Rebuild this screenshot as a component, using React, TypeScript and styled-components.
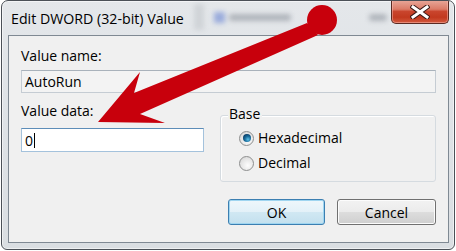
import React from "react";
import styled, { createGlobalStyle } from "styled-components";

const Global = createGlobalStyle`
  html, body { margin: 0; padding: 0; background: #ffffff; }
  body { font-family: "Open Sans", "Noto Sans", sans-serif; }
`;

const Stage = styled.div`
  position: relative;
  width: 456px;
  height: 251px;
  overflow: hidden;
`;

const Window = styled.div`
  box-sizing: border-box;
  margin-left: 1px;
  width: 454px;
  height: 250px;
  border: 1px solid #4b5057;
  border-radius: 7px 7px 6px 6px;
  background: linear-gradient(180deg, #e4e7ea 0%, #dfe3e7 40%, #dadee2 100%);
  box-shadow: inset 0 0 0 1px rgba(255, 255, 255, 0.55);
  display: flex;
  flex-direction: column;
  padding: 0 5px 6px 6px;
  overflow: hidden;
`;

const TitleBar = styled.div`
  height: 34px;
  display: flex;
  align-items: flex-start;
  flex-shrink: 0;
`;

const Title = styled.div`
  padding: 8px 0 0 3px;
  font-size: 14.2px;
  line-height: 20px;
  color: #000;
  white-space: nowrap;
`;

const Ghost = styled.div`
  display: flex;
  align-items: center;
  gap: 4px;
  margin: 8px 0 0 10px;
  height: 16px;
  filter: blur(2.5px);
  opacity: 0.7;
`;

const GhostBar = styled.div`
  width: 10px;
  height: 26px;
  background: #c8ccd0;
  margin-right: 6px;
`;

const GhostIcon = styled.div`
  width: 11px;
  height: 11px;
  background: #7b93d6;
`;

const GhostText = styled.div<{ $w: number }>`
  width: ${(p) => p.$w}px;
  height: 7px;
  background: #9aa0a8;
  border-radius: 3px;
`;

const GhostRight = styled(Ghost)`
  margin-left: 78px;
`;

const CloseButton = styled.div`
  margin-left: auto;
  margin-top: -1px;
  width: 58px;
  height: 24px;
  box-sizing: border-box;
  border: 1px solid #5a2a22;
  border-top: none;
  border-radius: 0 0 5px 5px;
  background: linear-gradient(
    180deg,
    #e9a99b 0%,
    #dc7b67 40%,
    #c9452d 50%,
    #c2391f 75%,
    #d35a3e 100%
  );
  box-shadow: inset 0 0 0 1px rgba(255, 200, 190, 0.45);
  display: flex;
  align-items: center;
  justify-content: center;
`;

const Client = styled.div`
  flex: 1;
  box-sizing: border-box;
  border: 1px solid #7f8993;
  background: #f0f0f0;
  padding: 12px 12px 17px 12px;
  display: flex;
  flex-direction: column;
`;

const Label = styled.div`
  font-size: 14px;
  line-height: 16px;
  color: #000;
  white-space: nowrap;
`;

const ReadOnlyField = styled.div`
  margin-top: 6px;
  height: 23px;
  box-sizing: border-box;
  border: 1px solid #c5ccd3;
  border-top-color: #a9b2bb;
  background: #f3f3f3;
  padding-left: 3px;
  font-size: 14px;
  line-height: 21px;
  color: #000;
`;

const MiddleRow = styled.div`
  margin-top: 10px;
  display: flex;
  gap: 16px;
`;

const DataColumn = styled.div`
  width: 183px;
  display: flex;
  flex-direction: column;
  gap: 9px;
`;

const TextInput = styled.div`
  height: 24px;
  box-sizing: border-box;
  border: 1px solid #a4c2dc;
  border-top-color: #5d8db8;
  background: #ffffff;
  padding-left: 3px;
  display: flex;
  align-items: center;
  font-size: 14px;
  color: #000;
`;

const Caret = styled.span`
  display: inline-block;
  width: 1px;
  height: 15px;
  background: #000;
  margin-left: 1px;
`;

const GroupBox = styled.div`
  flex: 1;
  margin-top: 12px;
  height: 67px;
  box-sizing: border-box;
  border: 1px solid #d5dbe0;
  border-radius: 3px;
  box-shadow: inset 1px 1px 0 #ffffff;
  padding: 0 0 0 18px;
  display: flex;
  flex-direction: column;
`;

const Legend = styled.div`
  align-self: flex-start;
  margin: -10px 0 0 -11px;
  padding: 0 2px 0 1px;
  background: #f0f0f0;
  font-size: 14px;
  line-height: 16px;
  color: #000;
`;

const RadioRow = styled.div<{ $first?: boolean }>`
  margin-top: ${(p) => (p.$first ? 8 : 9)}px;
  height: 16px;
  display: flex;
  align-items: center;
  gap: 4px;
  font-size: 14px;
  line-height: 16px;
  color: #000;
`;

const RadioCircle = styled.span<{ $checked?: boolean }>`
  width: 15px;
  height: 15px;
  box-sizing: border-box;
  border-radius: 50%;
  border: 1px solid #8e8f8f;
  background: radial-gradient(circle at 60% 65%, #fdfdfd 0%, #e6e6e6 55%, #cfcfcf 100%);
  display: flex;
  align-items: center;
  justify-content: center;
  flex-shrink: 0;
  &::after {
    content: "";
    display: ${(p) => (p.$checked ? "block" : "none")};
    width: 8px;
    height: 8px;
    border-radius: 50%;
    background: radial-gradient(circle at 62% 68%, #5cc0e6 0%, #1a6e9e 40%, #0a3f68 75%, #082c48 100%);
  }
`;

const ButtonRow = styled.div`
  margin-top: 17px;
  display: flex;
  justify-content: flex-end;
  gap: 12px;
`;

const Button = styled.div<{ $default?: boolean }>`
  width: ${(p) => (p.$default ? 97 : 99)}px;
  height: 26px;
  box-sizing: border-box;
  border-radius: 3px;
  border: 1px solid ${(p) => (p.$default ? "#3c7fb1" : "#707070")};
  background: ${(p) =>
    p.$default
      ? "linear-gradient(180deg, #eef7fb 0%, #e3f1f8 50%, #d1e8f3 50%, #c3e0ee 100%)"
      : "linear-gradient(180deg, #f2f2f2 0%, #ebebeb 50%, #dddddd 50%, #cfcfcf 100%)"};
  box-shadow: inset 0 0 0 1px ${(p) => (p.$default ? "#9fd5f0" : "#fcfcfc")};
  display: flex;
  align-items: center;
  justify-content: center;
  font-size: 14px;
  color: #000;
`;

const Overlay = styled.svg`
  position: absolute;
  left: 0;
  top: 0;
  width: 456px;
  height: 251px;
  pointer-events: none;
`;

export default function App() {
  return (
    <>
      <Global />
      <Stage>
        <Window>
          <TitleBar>
            <Title>Edit DWORD (32-bit) Value</Title>
            <Ghost>
              <GhostBar />
              <GhostIcon />
              <GhostText $w={62} />
            </Ghost>
            <GhostRight>
              <GhostText $w={18} />
            </GhostRight>
            <CloseButton>
              <svg width="20" height="14" viewBox="0 0 20 14">
                <path
                  d="M3 2 L17 12 M17 2 L3 12"
                  stroke="#3a1a16"
                  strokeWidth="5"
                  strokeLinecap="square"
                />
                <path
                  d="M3 2 L17 12 M17 2 L3 12"
                  stroke="#ffffff"
                  strokeWidth="3"
                  strokeLinecap="square"
                />
              </svg>
            </CloseButton>
          </TitleBar>
          <Client>
            <Label>Value name:</Label>
            <ReadOnlyField>AutoRun</ReadOnlyField>
            <MiddleRow>
              <DataColumn>
                <Label>Value data:</Label>
                <TextInput>
                  0<Caret />
                </TextInput>
              </DataColumn>
              <GroupBox>
                <Legend>Base</Legend>
                <RadioRow $first>
                  <RadioCircle $checked />
                  Hexadecimal
                </RadioRow>
                <RadioRow>
                  <RadioCircle />
                  Decimal
                </RadioRow>
              </GroupBox>
            </MiddleRow>
            <ButtonRow>
              <Button $default>OK</Button>
              <Button>Cancel</Button>
            </ButtonRow>
          </Client>
        </Window>
        <Overlay viewBox="0 0 456 251">
          <polygon
            points="98,122 140,72 134,93 307,23 318,35 140,114 165,123"
            fill="#c8000c"
          />
          <circle cx="322" cy="20" r="15" fill="#c8000c" />
        </Overlay>
      </Stage>
    </>
  );
}
